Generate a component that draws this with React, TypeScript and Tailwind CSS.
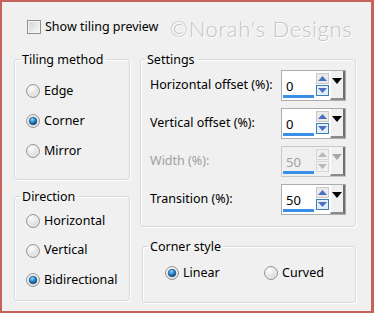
import React from 'react';

const font = { fontFamily: '"Noto Sans", "Open Sans", sans-serif' };

// radio bullet, drawn like the classic Windows 7 one
const Radio = ({ checked }: { checked?: boolean }) => (
    <svg width="14" height="14" viewBox="0 0 14 14" className="shrink-0">
        <defs>
            <radialGradient id="rOff" cx="0.35" cy="0.3" r="0.8">
                <stop offset="0" stopColor="#ffffff" />
                <stop offset="1" stopColor="#cfcfcf" />
            </radialGradient>
            <radialGradient id="rOn" cx="0.4" cy="0.3" r="0.7">
                <stop offset="0" stopColor="#8fd6ff" />
                <stop offset="0.5" stopColor="#2a8fd6" />
                <stop offset="1" stopColor="#0b3f73" />
            </radialGradient>
        </defs>
        <circle cx="7" cy="7" r="6.4" fill="url(#rOff)" stroke="#8c8c8c" strokeWidth="1" />
        <circle cx="7" cy="7" r="5.2" fill="none" stroke="#f4f4f4" strokeWidth="0.8" />
        {checked && <circle cx="7" cy="7" r="3.8" fill="url(#rOn)" stroke="#1b4a78" strokeWidth="0.7" />}
    </svg>
);

const RadioRow = ({ label, checked }: { label: string; checked?: boolean }) => (
    <div className="flex items-center gap-[4px] h-[16px] text-[12.5px] text-black">
        <Radio checked={checked} />
        <span>{label}</span>
    </div>
);

// spin box: number field + up/down + dropdown arrow
const Spinner = ({ value, disabled }: { value: string; disabled?: boolean }) => {
    const arrow = disabled ? '#b8b8b8' : '#4a6fc2';
    return (
        <div className={`flex h-[31px] w-[65px] border ${disabled ? 'border-[#c8c8c8] bg-[#f0f0f0]' : 'border-[#abadb3] bg-white'}`}>
            <div className="relative flex-1 flex items-center pl-[4px] pt-[2px]">
                <span className={`text-[13px] ${disabled ? 'text-[#a0a0a0]' : 'text-black'}`}>{value}</span>
                <div className="absolute left-[1px] bottom-[2px] w-[31px] h-[3px] bg-[#3a8ee6]" />
            </div>
            <div className="flex flex-col gap-[1px] pt-[2px] w-[14px]">
                <div className={`h-[11px] w-[13px] flex items-center justify-center border ${disabled ? 'border-[#d8d8d8] bg-[#f0f0f0]' : 'border-[#c9c9c9] bg-[#eaeaea]'}`}>
                    <svg width="9" height="5" viewBox="0 0 9 5"><path d="M0 5 L4.5 0 L9 5 Z" fill={arrow} /></svg>
                </div>
                <div className={`h-[11px] w-[13px] flex items-center justify-center border ${disabled ? 'border-[#d8d8d8] bg-[#f0f0f0]' : 'border-[#3c7fb1] bg-[#e4eef8]'}`}>
                    <svg width="9" height="5" viewBox="0 0 9 5"><path d="M0 0 L9 0 L4.5 5 Z" fill={arrow} /></svg>
                </div>
            </div>
            <div className="w-[15px] bg-[#f0f0f0] border-l border-l-white border-r-2 border-r-[#6d6d6d] border-b-2 border-b-[#8a8a8a] flex justify-center pt-[7px]">
                <svg width="10" height="6" viewBox="0 0 10 6"><path d="M0 0 L10 0 L5 6 Z" fill={disabled ? '#a8a8a8' : '#000'} /></svg>
            </div>
        </div>
    );
};

const SettingRow = ({ label, value, disabled }: { label: string; value: string; disabled?: boolean }) => (
    <div className="flex items-center justify-between">
        <span className={`text-[12.5px] ${disabled ? 'text-[#a0a0a0]' : 'text-black'}`}>{label}</span>
        <Spinner value={value} disabled={disabled} />
    </div>
);

const Group = ({ title, className, legendClass, children }: { title: string; className: string; legendClass: string; children: React.ReactNode }) => (
    <fieldset className={`border border-[#d8dbde] rounded-[3px] shadow-[inset_1px_1px_0_#ffffff,1px_1px_0_#ffffff] ${className}`}>
        <legend className={`px-[2px] text-[12.5px] text-black leading-[15px] ${legendClass}`}>{title}</legend>
        {children}
    </fieldset>
);

const App: React.FC = () => {
    return (
        <div style={font} className="w-[374px] h-[313px] bg-[#f0f0f0] border-t-2 border-l-2 border-b-2 border-r-[3px] border-[#c4635a] overflow-hidden">
            {/* top row */}
            <div className="flex items-center h-[40px] pt-[10px] pl-[25px]">
                <div className="w-[14px] h-[14px] border border-[#8e8f8f] bg-gradient-to-br from-[#d4d4d4] to-[#fafafa] shadow-[inset_0_0_0_1px_#f4f4f4]" />
                <span className="ml-[4px] text-[12.5px] text-black">Show tiling preview</span>
                <span
                    className="ml-[11px] mt-[3px] text-[22px] text-[#c4c4c4] tracking-[0.7px] [text-shadow:1px_1px_0_#ffffff]"
                    style={{ fontFamily: 'Lato, "Noto Sans", sans-serif', fontWeight: 300 }}
                >
                    ©Norah's Designs
                </span>
            </div>

            <div className="flex gap-[10px] pl-[12px] pt-[10px]">
                {/* left column */}
                <div className="flex flex-col gap-[9px] w-[116px]">
                    <Group title="Tiling method" className="h-[128px]" legendClass="ml-[5px]">
                        <div className="flex flex-col gap-[14px] pl-[11px] pt-[16px]">
                            <RadioRow label="Edge" />
                            <RadioRow label="Corner" checked />
                            <RadioRow label="Mirror" />
                        </div>
                    </Group>
                    <Group title="Direction" className="h-[112px]" legendClass="ml-[5px]">
                        <div className="flex flex-col gap-[13.5px] pl-[11px] pt-[9px]">
                            <RadioRow label="Horizontal" />
                            <RadioRow label="Vertical" />
                            <RadioRow label="Bidirectional" checked />
                        </div>
                    </Group>
                </div>

                {/* right column */}
                <div className="flex flex-col gap-[12px] w-[216px]">
                    <Group title="Settings" className="h-[175px]" legendClass="ml-[4px]">
                        <div className="flex flex-col gap-[7px] pl-[9px] pr-[9px] pt-[3px]">
                            <SettingRow label="Horizontal offset (%):" value="0" />
                            <SettingRow label="Vertical offset (%):" value="0" />
                            <SettingRow label="Width (%):" value="50" disabled />
                            <SettingRow label="Transition (%):" value="50" />
                        </div>
                    </Group>
                    <Group title="Corner style" className="h-[64px] ml-[2px]" legendClass="ml-[5px]">
                        <div className="flex items-center pl-[22px] pt-[11px]">
                            <div className="w-[99px]">
                                <RadioRow label="Linear" checked />
                            </div>
                            <RadioRow label="Curved" />
                        </div>
                    </Group>
                </div>
            </div>
        </div>
    );
};

export default App;
